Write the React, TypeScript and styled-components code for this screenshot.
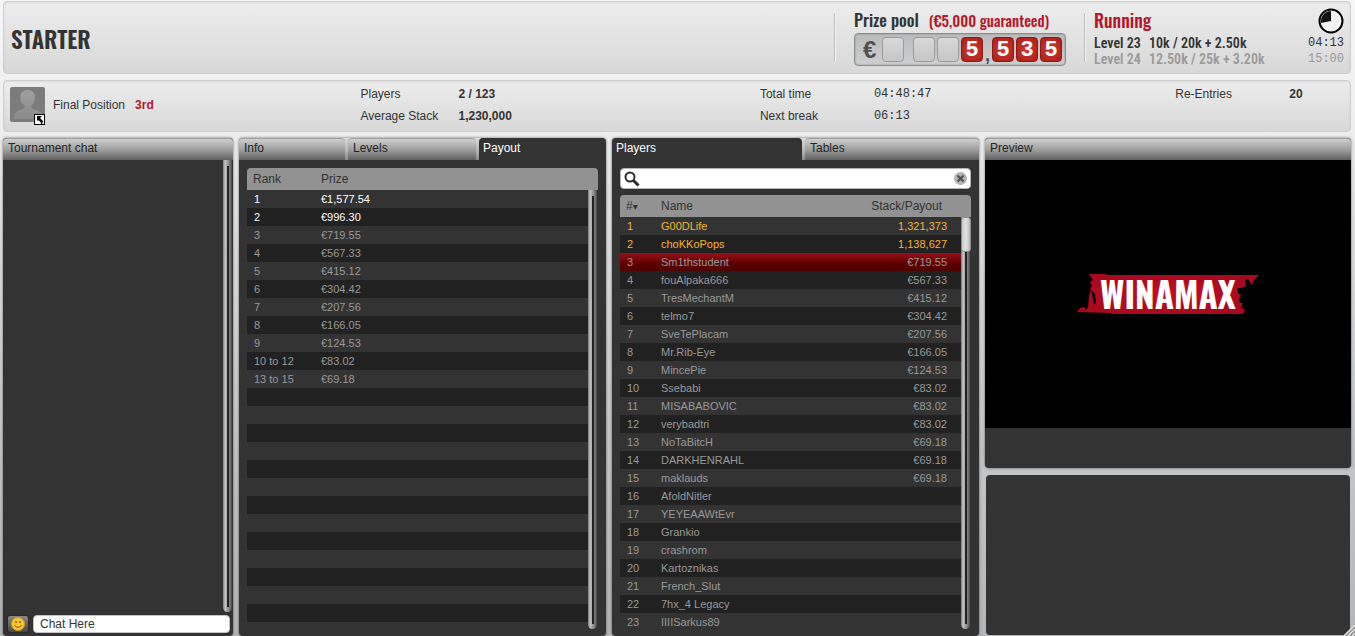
import React from "react";
import styled, { createGlobalStyle, css } from "styled-components";

const sans = `"Liberation Sans", Arial, sans-serif`;
const narrow = `Oswald, "Roboto Condensed", Roboto, Arial, sans-serif`;
const narrowSmall = `"Roboto Condensed", Oswald, Roboto, Arial, sans-serif`;
const mono = `"Liberation Mono", "Courier New", monospace`;

const GlobalStyle = createGlobalStyle`
  * { box-sizing: border-box; }
  body { margin: 0; background: #b4b5b7; font: 12px/16px ${sans}; color: #333; }
  button, input { font: inherit; color: inherit; margin: 0; }
  dl, dd, h1, h2, p { margin: 0; }
`;

const Page = styled.div`
  position: relative;
  display: flex;
  flex-direction: column;
  min-height: 100vh;
  padding: 1px 4px 0 3px;
  background: linear-gradient(#f6f6f6 0, #efefef 120px, #c6c7c9 440px, #b4b5b7 100%);
`;

const plate = css`
  border: 1px solid #cfcfcf;
  border-radius: 4px;
  background: linear-gradient(#ededed, #d8d8d8);
  box-shadow: inset 0 1px 2px rgba(0, 0, 0, 0.08);
`;

const Header = styled.header`
  ${plate}
  display: flex;
  height: 73px;
  padding: 0 6px 0 7px;
`;

const Title = styled.h1`
  flex: 1;
  align-self: center;
  padding-top: 2px;
  font: 600 23px/32px ${narrow};
`;

const HeaderSection = styled.section<{ $basis: number; $pad: number }>`
  flex: 0 0 ${(p) => p.$basis}px;
  margin: 11px 0;
  padding-left: ${(p) => p.$pad}px;
  border-left: 1px solid #bdbdbd;
  box-shadow: inset 1px 0 #f4f4f4;
`;

const PrizeLine = styled.h2`
  display: flex;
  gap: 10px;
  margin-top: -3px;
  font: 500 17px/20px ${narrow};
  white-space: nowrap;
`;

const Guaranteed = styled.span`
  font-size: 15px;
  color: #b5152b;
`;

const Counter = styled.div`
  display: flex;
  align-items: center;
  gap: 2px;
  width: 212px;
  height: 33px;
  margin-top: 3px;
  padding: 0 3px 0 8px;
  border: 1px solid #8d8d8d;
  border-radius: 4px;
  background: linear-gradient(#b9bbbc, #cdcfd0);
  box-shadow: inset 0 0 2px #888;
`;

const Currency = styled.span`
  width: 17px;
  font: bold 24px/30px ${sans};
  color: #505050;
`;

const Card = styled.span<{ $on?: boolean }>`
  width: 22px;
  height: 25px;
  border: 1px solid ${(p) => (p.$on ? "#8f1a15" : "#9b9b9b")};
  border-radius: 4px;
  background: ${(p) => (p.$on ? "radial-gradient(#cf3a30, #a91f19)" : "linear-gradient(#d8d8d8, #c6c6c6)")};
  color: #fff;
  text-align: center;
  font: bold 22px/25px ${mono};
`;

const Separator = styled.span`
  width: 5px;
  align-self: flex-end;
  font: bold 18px/20px ${sans};
  color: #505050;
`;

const StatusGrid = styled.div`
  display: grid;
  grid-template-columns: 55px 1fr auto;
  font: 600 14px/16px ${narrowSmall};
`;

const Running = styled.h2`
  grid-column: 1 / 3;
  height: 25px;
  margin-top: -3px;
  font: 500 18px/20px ${narrow};
  color: #b5152b;
`;

const Clock = styled.svg`
  justify-self: end;
  width: 26px;
  height: 26px;
  margin-top: -5px;
`;

const Cell = styled.span<{ $dim?: boolean }>`
  color: ${(p) => (p.$dim ? "#999" : "inherit")};
  white-space: nowrap;
`;

const Timer = styled.span<{ $dim?: boolean }>`
  font: 12px/16px ${mono};
  text-align: right;
  color: ${(p) => (p.$dim ? "#999" : "inherit")};
`;

const InfoBar = styled.section`
  ${plate}
  display: grid;
  grid-template-columns: 357fr 400fr 416fr 175fr;
  height: 52px;
  margin-top: 6px;
`;

const Position = styled.div`
  display: flex;
  align-items: center;
  padding-left: 6px;
  padding-bottom: 3px;
`;

const Avatar = styled.svg`
  width: 36px;
  height: 38px;
  margin: 3px 7px 0 0;
`;

const Rank = styled.strong`
  margin-left: 10px;
  color: #b5152b;
`;

const Facts = styled.dl<{ $label: number }>`
  display: grid;
  grid-template-columns: ${(p) => p.$label}px 1fr;
  align-content: start;
  padding-top: 2px;
  line-height: 22px;
`;

const FactValue = styled.dd<{ $digital?: boolean }>`
  font-weight: ${(p) => (p.$digital ? "normal" : "bold")};
  font-family: ${(p) => (p.$digital ? mono : sans)};
`;

const Columns = styled.main`
  flex: 1;
  display: grid;
  grid-template-columns: 230fr 367fr 367fr 366fr;
  gap: 6px;
  margin-top: 6px;
`;

const Panel = styled.section`
  display: flex;
  flex-direction: column;
  min-width: 0;
  border-radius: 4px;
  background: #333;
  box-shadow: 0 0 3px rgba(0, 0, 0, 0.55);
`;

const bevel = css`
  border: 0;
  border-top: 1px solid #a0a0a0;
  border-radius: 4px 4px 0 0;
  background: linear-gradient(#cfcfcf, #9a9a9a 55%, #606060);
  color: #222;
`;

const PanelTitle = styled.h2`
  ${bevel}
  height: 22px;
  padding-left: 5px;
  font: 12px/18px ${sans};
`;

const Tabs = styled.div<{ $columns: string }>`
  display: grid;
  grid-template-columns: ${(p) => p.$columns};
  gap: 3px;
  height: 22px;
  border-radius: 4px 4px 0 0;
  background: linear-gradient(#dcdcdc, #b4b4b4 60%, #8a8a8a);
`;

const Tab = styled.button<{ $active?: boolean }>`
  ${bevel}
  ${(p) => p.$active && "background: #333; color: #fff; border-top-color: #333;"}
  padding: 0 0 3px ${(p) => (p.$active ? 4 : 5)}px;
  text-align: left;
`;

const PanelBody = styled.div`
  flex: 1;
  display: flex;
  flex-direction: column;
  padding: 8px 8px 5px;
`;

const Bar = styled.div<{ $top: number; $bottom: number }>`
  position: absolute;
  top: ${(p) => p.$top}px;
  right: 0;
  bottom: ${(p) => p.$bottom}px;
  width: 10px;
  background: #333;
`;

const Track = styled.div`
  position: relative;
  width: 9px;
  height: 100%;
  border-radius: 0 0 5px 5px;
  background: linear-gradient(90deg, #7a7a7a, #c6c6c6 25%, #9a9a9a 50%, #8c8c8c 65%, #484848);
  &::after {
    content: "";
    position: absolute;
    top: 6px;
    bottom: 5px;
    left: 4px;
    width: 2px;
    background: #222;
  }
`;

const Thumb = styled.div`
  position: absolute;
  top: 0;
  left: 0;
  right: 0;
  height: 35px;
  border: 1px solid #8d8d8d;
  border-radius: 3px;
  background: linear-gradient(90deg, #c9c9c9, #e2e2e2 50%, #b9b9b9);
`;

function ScrollBar({ top, bottom, thumb }: { top: number; bottom: number; thumb?: boolean }) {
  return (
    <Bar $top={top} $bottom={bottom}>
      <Track />
      {thumb && <Thumb />}
    </Bar>
  );
}

const ChatLog = styled.div`
  position: relative;
  flex: 1;
  min-height: 200px;
`;

const ChatForm = styled.form`
  display: flex;
  gap: 4px;
  padding: 2px 3px 3px 4px;
`;

const SmileyButton = styled.button`
  display: grid;
  place-items: center;
  width: 22px;
  height: 18px;
  padding: 0;
  border: 1px solid #292929;
  border-radius: 3px;
  background: linear-gradient(#888, #484848);
`;

const ChatInput = styled.input`
  flex: 1;
  min-width: 0;
  height: 18px;
  padding: 0 6px;
  border: 1px solid #c4c4c4;
  border-radius: 4px;
  background: #fff;
  &::placeholder { color: #333; opacity: 1; }
`;

const SearchBox = styled.label`
  display: flex;
  align-items: center;
  height: 21px;
  margin-bottom: 6px;
  padding: 0 3px;
  border: 1px solid #b5b5b5;
  border-radius: 4px;
  background: #fff;
`;

const SearchInput = styled.input`
  flex: 1;
  min-width: 0;
  border: 0;
  outline: 0;
  background: none;
`;

const ClearButton = styled.button`
  display: flex;
  padding: 0;
  border: 0;
  background: none;
`;

const TableFrame = styled.div`
  position: relative;
  flex: 1;
`;

const DataTable = styled.table`
  width: 100%;
  border-spacing: 0;
  table-layout: fixed;
  font-size: 11px;
  line-height: 18px;
  color: #999;
`;

const HeadCell = styled.th<{ $width?: number; $right?: boolean }>`
  width: ${(p) => (p.$width ? `${p.$width}px` : "auto")};
  height: 22px;
  padding: 0 ${(p) => (p.$right ? 29 : 0)}px 0 6px;
  background: #929292;
  color: #333;
  font-size: 12px;
  font-weight: normal;
  text-align: ${(p) => (p.$right ? "right" : "left")};
  &:first-child { border-top-left-radius: 4px; }
  &:last-child { border-top-right-radius: 4px; }
`;

const SortMark = styled.span`
  font: 10px/10px "DejaVu Sans", sans-serif;
`;

type Tone = "normal" | "bright" | "gold" | "self";
const toneColor: Record<Tone, string> = { normal: "#999", bright: "#fff", gold: "#f5b335", self: "#999" };

const Row = styled.tr<{ $tone: Tone }>`
  height: 18px;
  color: ${(p) => toneColor[p.$tone]};
  &:nth-child(even) { background: #212121; }
  ${(p) => p.$tone === "self" && "background: linear-gradient(#9a0f19, #5c0000 60%, #4e0000);"}
`;

const DataCell = styled.td<{ $right?: boolean }>`
  height: 18px;
  padding: 0 ${(p) => (p.$right ? 24 : 0)}px 0 ${(p) => (p.$right ? 0 : 6)}px;
  text-align: ${(p) => (p.$right ? "right" : "left")};
  white-space: nowrap;
  &:first-child { padding-left: 7px; }
`;

const SideColumn = styled.div`
  display: flex;
  flex-direction: column;
  gap: 7px;
  min-width: 0;
`;

const PreviewPanel = styled(Panel)`
  height: 330px;
`;

const Screen = styled.div`
  display: grid;
  place-items: center;
  height: 268px;
  background: #000;
`;

const EmptyPanel = styled(Panel)`
  flex: 1;
  margin: 0 1px 1px;
  box-shadow: none;
`;

const Grip = styled.svg`
  position: absolute;
  right: 0;
  bottom: 0;
  width: 12px;
  height: 12px;
`;

const payouts: [string, string][] = [
  ["1", "€1,577.54"], ["2", "€996.30"], ["3", "€719.55"], ["4", "€567.33"],
  ["5", "€415.12"], ["6", "€304.42"], ["7", "€207.56"], ["8", "€166.05"],
  ["9", "€124.53"], ["10 to 12", "€83.02"], ["13 to 15", "€69.18"],
];
const payoutRows = [...payouts, ...Array.from({ length: 13 }, () => ["", ""] as [string, string])];

const players: [string, string][] = [
  ["G00DLife", "1,321,373"], ["choKKoPops", "1,138,627"], ["Sm1thstudent", "€719.55"],
  ["fouAlpaka666", "€567.33"], ["TresMechantM", "€415.12"], ["telmo7", "€304.42"],
  ["SveTePlacam", "€207.56"], ["Mr.Rib-Eye", "€166.05"], ["MincePie", "€124.53"],
  ["Ssebabi", "€83.02"], ["MISABABOVIC", "€83.02"], ["verybadtri", "€83.02"],
  ["NoTaBitcH", "€69.18"], ["DARKHENRAHL", "€69.18"], ["maklauds", "€69.18"],
  ["AfoldNitler", ""], ["YEYEAAWtEvr", ""], ["Grankio", ""], ["crashrom", ""],
  ["Kartoznikas", ""], ["French_Slut", ""], ["7hx_4 Legacy", ""], ["IIIISarkus89", ""],
];

const playerTone = (i: number): Tone => (i < 2 ? "gold" : i === 2 ? "self" : "normal");

function Logo() {
  return (
    <svg width="184" height="62" viewBox="0 -10 184 62" role="img" aria-label="Winamax">
      <defs>
        <radialGradient id="banner">
          <stop offset="0" stopColor="#c00d24" />
          <stop offset="1" stopColor="#a80a1d" />
        </radialGradient>
      </defs>
      <path
        fill="url(#banner)"
        d="M13 1h16l3 1h151l-5 5-2 5-2-3-2-3-3 1 1 6-5 2h-4l1 5 3 2-2 4 1 4h3l-2 4 4 3-2 3v1H36l-1-1L1 39l3-4 4-1 2 3 2-3 1-11 2-7 3 15 2-1-1-9-5-5 2-3-2-4 3-2z"
      />
      <text x="92" y="36" textAnchor="middle" fontFamily={narrow} fontWeight="700" fontSize="35" fill="#fff">
        WINAMAX
      </text>
    </svg>
  );
}

export default function App() {
  return (
    <Page>
      <GlobalStyle />
      <Header>
        <Title>STARTER</Title>
        <HeaderSection $basis={250} $pad={19}>
          <PrizeLine>
            Prize pool <Guaranteed>(€5,000 guaranteed)</Guaranteed>
          </PrizeLine>
          <Counter>
            <Currency>€</Currency>
            <Card />
            <Separator />
            <Card />
            <Card />
            <Card $on>5</Card>
            <Separator>,</Separator>
            <Card $on>5</Card>
            <Card $on>3</Card>
            <Card $on>5</Card>
          </Counter>
        </HeaderSection>
        <HeaderSection $basis={260} $pad={9}>
          <StatusGrid>
            <Running>Running</Running>
            <Clock viewBox="0 0 26 26">
              <circle cx="13" cy="13" r="11.500" fill="#f2f2f2" stroke="#000" strokeWidth="2" />
              <path d="M13 13V3A10 10 0 0 0 3.200 15z" fill="#111" />
            </Clock>
            <Cell>Level 23</Cell>
            <Cell>10k / 20k + 2.50k</Cell>
            <Timer>04:13</Timer>
            <Cell $dim>Level 24</Cell>
            <Cell $dim>12.50k / 25k + 3.20k</Cell>
            <Timer $dim>15:00</Timer>
          </StatusGrid>
        </HeaderSection>
      </Header>

      <InfoBar>
        <Position>
          <Avatar viewBox="0 0 36 38">
            <defs>
              <linearGradient id="bust" x1="0" y1="0" x2="0" y2="1">
                <stop offset="0" stopColor="#a0a0a0" />
                <stop offset="1" stopColor="#8a8a8a" />
              </linearGradient>
            </defs>
            <rect width="35" height="35" rx="2" fill="#7c7c7c" />
            <path
              fill="url(#bust)"
              d="M17.500 3c5 0 8 3 7.500 8-.3 4-2 6-4 8 0 2 2 3 5 4 4 1 6 3 6 9H4c0-6 2-8 6-9 3-1 5-2 5-4-3-2-4.500-4-4.700-8C10 6 13 3 17.500 3z"
            />
            <rect x="24.500" y="27.500" width="10" height="10" fill="#fff" stroke="#000" />
            <path d="M27 29h5l-2 2 3 3-1 3h-1l-.3-2-2.700-2-1 1z" fill="#000" />
          </Avatar>
          Final Position <Rank>3rd</Rank>
        </Position>
        <Facts $label={98}>
          <dt>Players</dt>
          <FactValue>2 / 123</FactValue>
          <dt>Average Stack</dt>
          <FactValue>1,230,000</FactValue>
        </Facts>
        <Facts $label={114}>
          <dt>Total time</dt>
          <FactValue $digital>04:48:47</FactValue>
          <dt>Next break</dt>
          <FactValue $digital>06:13</FactValue>
        </Facts>
        <Facts $label={114}>
          <dt>Re-Entries</dt>
          <FactValue>20</FactValue>
        </Facts>
      </InfoBar>

      <Columns>
        <Panel>
          <PanelTitle>Tournament chat</PanelTitle>
          <ChatLog>
            <ScrollBar top={0} bottom={1} />
          </ChatLog>
          <ChatForm onSubmit={(e) => e.preventDefault()}>
            <SmileyButton type="button" aria-label="Insert smiley">
              <svg width="14" height="14" viewBox="0 0 14 14">
                <circle cx="7" cy="7" r="6.500" fill="#f6c832" stroke="#d99a14" />
                <circle cx="5" cy="5" r="1" fill="#8a5a08" />
                <circle cx="9" cy="5" r="1" fill="#8a5a08" />
                <path d="M3.500 8c1 3 6 3 7 0" fill="none" stroke="#8a5a08" />
              </svg>
            </SmileyButton>
            <ChatInput aria-label="Chat message" placeholder="Chat Here" />
          </ChatForm>
        </Panel>

        <Panel>
          <Tabs $columns="106fr 128fr 127fr">
            <Tab>Info</Tab>
            <Tab>Levels</Tab>
            <Tab $active>Payout</Tab>
          </Tabs>
          <PanelBody>
            <TableFrame>
              <DataTable>
                <thead>
                  <tr>
                    <HeadCell $width={68}>Rank</HeadCell>
                    <HeadCell>Prize</HeadCell>
                  </tr>
                </thead>
                <tbody>
                  {payoutRows.map(([rank, prize], i) => (
                    <Row key={i} $tone={i < 2 ? "bright" : "normal"}>
                      <DataCell>{rank}</DataCell>
                      <DataCell>{prize}</DataCell>
                    </Row>
                  ))}
                </tbody>
              </DataTable>
              <ScrollBar top={22} bottom={2} />
            </TableFrame>
          </PanelBody>
        </Panel>

        <Panel>
          <Tabs $columns="190fr 174fr">
            <Tab $active>Players</Tab>
            <Tab>Tables</Tab>
          </Tabs>
          <PanelBody>
            <SearchBox>
              <svg width="16" height="16" viewBox="0 0 16 16" fill="none" stroke="#2b2b2b">
                <circle cx="6" cy="6" r="4.500" strokeWidth="2" />
                <path d="M9.500 9.500L14.500 14.500" strokeWidth="3" />
              </svg>
              <SearchInput type="text" aria-label="Search players" />
              <ClearButton type="button" aria-label="Clear search">
                <svg width="13" height="13" viewBox="0 0 13 13">
                  <circle cx="6.500" cy="6.500" r="6.500" fill="#b4b4b4" />
                  <path d="M3.500 3.500l6 6m0-6l-6 6" stroke="#4d4d4d" strokeWidth="2" />
                </svg>
              </ClearButton>
            </SearchBox>
            <TableFrame>
              <DataTable>
                <thead>
                  <tr>
                    <HeadCell $width={35}>#<SortMark>▾</SortMark></HeadCell>
                    <HeadCell>Name</HeadCell>
                    <HeadCell $right>Stack/Payout</HeadCell>
                  </tr>
                </thead>
                <tbody>
                  {players.map(([name, stack], i) => (
                    <Row key={name} $tone={playerTone(i)}>
                      <DataCell>{i + 1}</DataCell>
                      <DataCell>{name}</DataCell>
                      <DataCell $right>{stack}</DataCell>
                    </Row>
                  ))}
                </tbody>
              </DataTable>
              <ScrollBar top={22} bottom={2} thumb />
            </TableFrame>
          </PanelBody>
        </Panel>

        <SideColumn>
          <PreviewPanel>
            <PanelTitle>Preview</PanelTitle>
            <Screen>
              <Logo />
            </Screen>
          </PreviewPanel>
          <EmptyPanel />
        </SideColumn>
      </Columns>
      <Grip viewBox="0 0 12 12">
        <path d="M12 0v12H0z" fill="#8a8a8a" />
        <path d="M1 12L12 1M5 12l7-7M9 12l3-3" stroke="#e6e6e6" strokeWidth="1.500" />
      </Grip>
    </Page>
  );
}
